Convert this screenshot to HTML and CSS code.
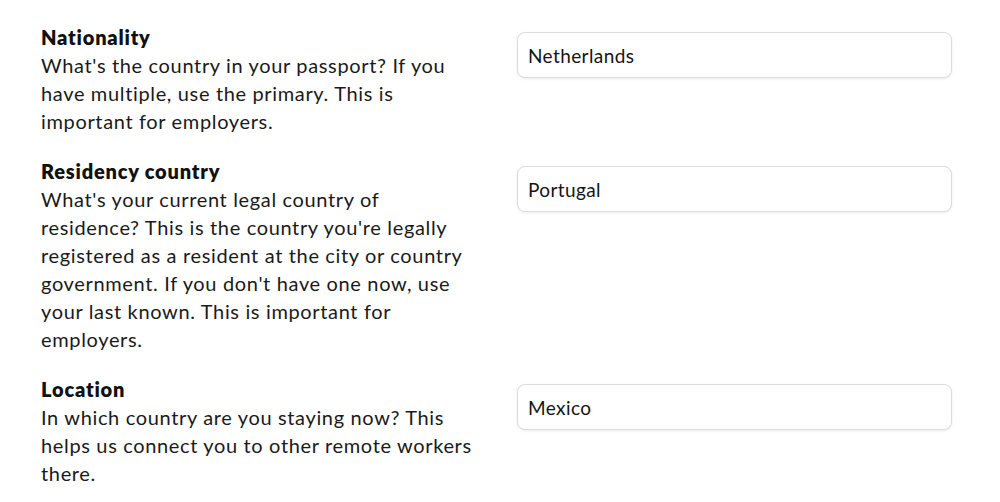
FILE: index.html
```html
<!DOCTYPE html>
<html lang="en">
<head>
<meta charset="utf-8">
<title>Profile</title>
<link rel="stylesheet" href="styles.css">
</head>
<body>
<main class="form">
  <div class="row">
    <div class="info">
      <div class="label">Nationality</div>
      <div class="desc">What's the country in your passport? If you have multiple, use the primary. This is important for employers.</div>
    </div>
    <div class="field"><input class="input" type="text" value="Netherlands"></div>
  </div>
  <div class="row">
    <div class="info">
      <div class="label">Residency country</div>
      <div class="desc">What's your current legal country of residence? This is the country you're legally registered as a resident at the city or country government. If you don't have one now, use your last known. This is important for employers.</div>
    </div>
    <div class="field"><input class="input" type="text" value="Portugal"></div>
  </div>
  <div class="row">
    <div class="info">
      <div class="label">Location</div>
      <div class="desc">In which country are you staying now? This helps us connect you to other remote workers there.</div>
    </div>
    <div class="field"><input class="input" type="text" value="Mexico"></div>
  </div>
</main>
</body>
</html>
```
FILE: styles.css
```css
html, body {
  margin: 0;
  padding: 0;
  background: #ffffff;
}
body {
  font-family: "Lato", "Open Sans", "Liberation Sans", sans-serif;
  color: #161616;
}
.form {
  display: flex;
  flex-direction: column;
  gap: 22px;
  padding: 23px 0 0 41px;
}
.row {
  display: grid;
  grid-template-columns: 435px 435px;
  column-gap: 41px;
  align-items: start;
}
.label {
  font-size: 20px;
  line-height: 28px;
  font-weight: 800;
  letter-spacing: 0.8px;
  color: #111111;
}
.desc {
  font-size: 20px;
  line-height: 28px;
  font-weight: 400;
  letter-spacing: 0.65px;
  color: #1a1a1a;
}
.field {
  padding-top: 9px;
}
.input {
  box-sizing: border-box;
  display: block;
  width: 100%;
  height: 46px;
  margin: 0;
  padding: 0 10px;
  border: 1px solid #dcdcdc;
  border-radius: 8px;
  box-shadow: 0 1px 3px rgba(0, 0, 0, 0.08);
  background: #ffffff;
  font-family: "Lato", "Open Sans", "Liberation Sans", sans-serif;
  font-size: 19px;
  letter-spacing: 0.4px;
  color: #141414;
  outline: none;
}
```
